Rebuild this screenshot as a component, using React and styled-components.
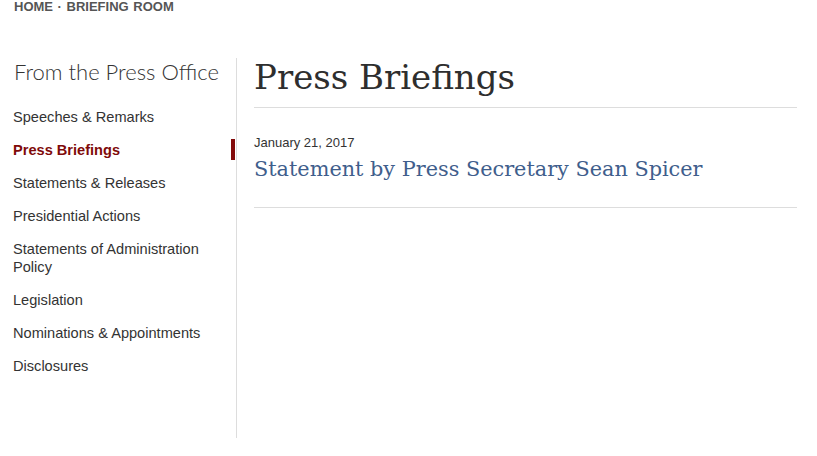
import React from 'react';
import styled, { createGlobalStyle } from 'styled-components';

const GlobalStyle = createGlobalStyle`
  body {
    margin: 0;
    background: #fff;
    font-family: "Liberation Sans", Arial, sans-serif;
  }
`;

const Page = styled.div`
  width: 817px;
  height: 456px;
  overflow: hidden;
`;

const Breadcrumb = styled.div`
  padding-left: 14px;
  font-size: 13px;
  line-height: 13px;
  font-weight: 700;
  color: #555;
  text-transform: uppercase;
  word-spacing: 1px;
`;

const Layout = styled.div`
  display: flex;
  margin-top: 45px;
`;

const Sidebar = styled.aside`
  width: 223px;
  height: 380px;
  padding-left: 13px;
  border-right: 1px solid #ddd;
  flex-shrink: 0;
`;

const SideTitle = styled.h2`
  margin: 0 0 20px 1px;
  font-family: Lato, "Open Sans", sans-serif;
  font-weight: 300;
  font-size: 22px;
  line-height: 28px;
  color: #333;
`;

const NavList = styled.ul`
  list-style: none;
  margin: 0;
  padding: 0;
  display: flex;
  flex-direction: column;
  gap: 12px;
`;

const NavItem = styled.li`
  position: relative;
`;

const NavLink = styled.a`
  display: block;
  padding: 2px 20px 1px 0;
  font-size: 14.6px;
  line-height: 18px;
  text-decoration: none;
  color: ${({ active }) => (active ? '#7f0a0a' : '#333')};
  font-weight: ${({ active }) => (active ? 700 : 400)};

  ${({ active }) =>
    active &&
    `
    &::after {
      content: '';
      position: absolute;
      top: 0;
      right: 1px;
      width: 4px;
      height: 100%;
      background: #830b0b;
    }
  `}
`;

const Main = styled.main`
  width: 543px;
  padding-left: 17px;
`;

const Heading = styled.h1`
  margin: 0;
  padding-bottom: 10px;
  border-bottom: 1px solid #ddd;
  font-family: "DejaVu Serif", "Liberation Serif", serif;
  font-weight: 400;
  font-size: 34px;
  line-height: 39px;
  color: #2e2e2e;
`;

const Entry = styled.article`
  padding: 28px 0 23px;
  border-bottom: 1px solid #ddd;
`;

const Date = styled.div`
  font-size: 13px;
  line-height: 14px;
  color: #333;
`;

const EntryLink = styled.a`
  display: block;
  padding-top: 4px;
  font-family: "DejaVu Serif", "Liberation Serif", serif;
  font-size: 20.8px;
  line-height: 30px;
  color: #3f5e8c;
  text-decoration: none;
`;

const links = [
  'Speeches & Remarks',
  'Press Briefings',
  'Statements & Releases',
  'Presidential Actions',
  'Statements of Administration Policy',
  'Legislation',
  'Nominations & Appointments',
  'Disclosures',
];

export default function App() {
  return (
    <Page>
      <GlobalStyle />
      <Breadcrumb>Home · Briefing Room</Breadcrumb>
      <Layout>
        <Sidebar>
          <SideTitle>From the Press Office</SideTitle>
          <NavList>
            {links.map((label) => (
              <NavItem key={label}>
                <NavLink href="#" active={label === 'Press Briefings' ? 1 : 0}>
                  {label}
                </NavLink>
              </NavItem>
            ))}
          </NavList>
        </Sidebar>
        <Main>
          <Heading>Press Briefings</Heading>
          <Entry>
            <Date>January 21, 2017</Date>
            <EntryLink href="#">Statement by Press Secretary Sean Spicer</EntryLink>
          </Entry>
        </Main>
      </Layout>
    </Page>
  );
}
